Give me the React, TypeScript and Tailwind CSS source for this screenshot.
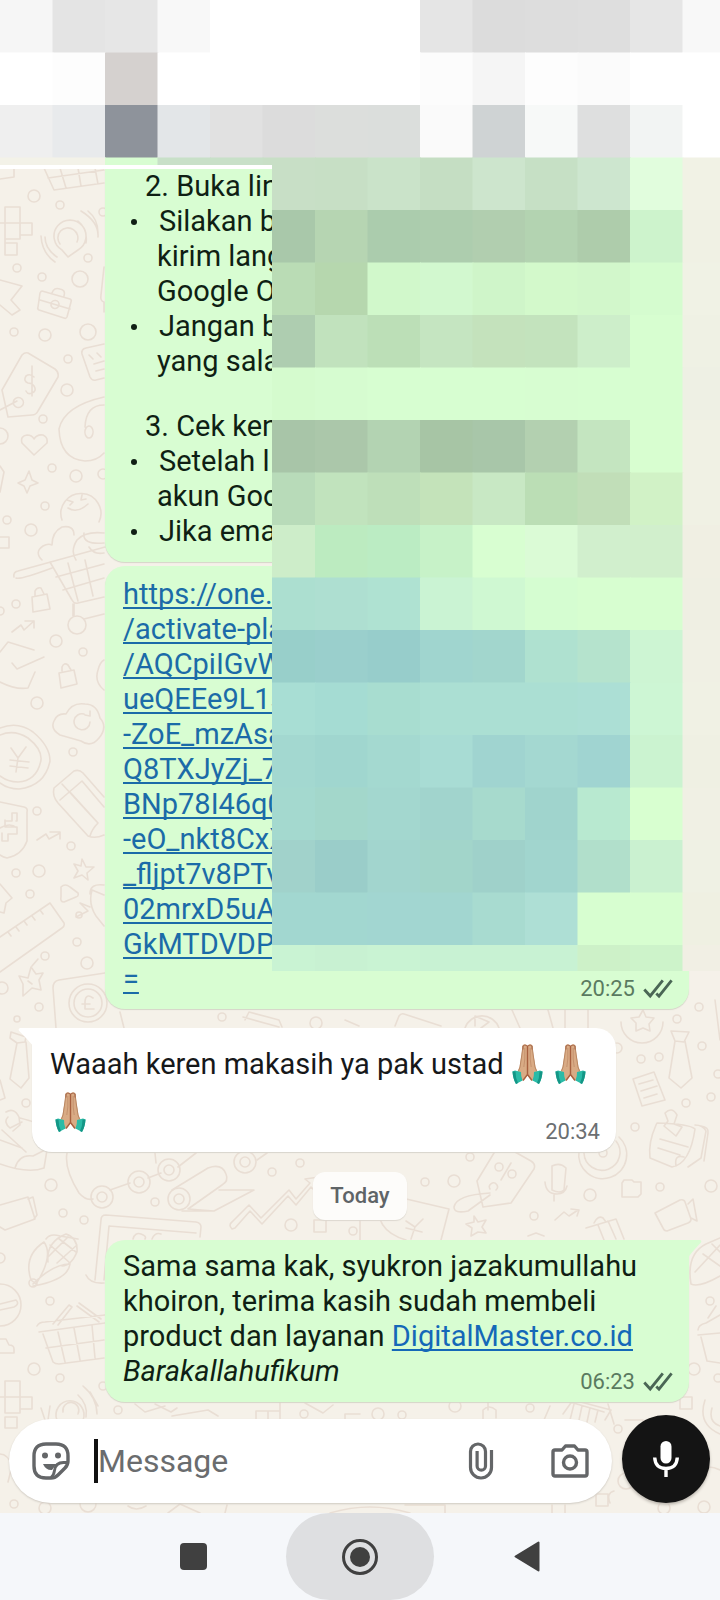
import React from 'react';

const CELL = 52.5;

// Pixelated header, one row of colours per block row
const headerRows: string[][] = [
  ['#f6f6f6', '#e4e4e4', '#e6e6e6', '#f8f8f8', '#fff', '#fff', '#fff', '#fff', '#e5e5e5', '#dcdcdc', '#dddddd', '#dedede', '#e6e6e6', '#f8f8f8'],
  ['#fff', '#fdfdfd', '#d5d1cf', '#fff', '#fff', '#fff', '#fff', '#fff', '#fcfcfc', '#f5f5f5', '#fdfdfd', '#fbfbfb', '#fff', '#fff'],
  ['#efefef', '#e8eaec', '#8e939b', '#e3e6e8', '#e1e1e1', '#dcdcdc', '#dcdedc', '#dbdedc', '#fafafa', '#cfd3d4', '#f7f9f8', '#dedfdf', '#f2f4f3', '#fff'],
  ['#f3f2e8', '#f3f2e8', '#d8fdd2', '#c8e0c8', '#c8e0c8', '#c8dfc6', '#c7dfc5', '#cae3c9', '#c5dec3', '#cde5cd', '#c6e0c5', '#cde6cf', '#e1fddd', '#f1f2e5'],
];

// Pixelated block over the sent messages
const chatRows: string[][] = [
  ['#c8dfc6', '#c7dfc5', '#cae3c9', '#c5dec3', '#cde5cd', '#c6e0c5', '#cde6cf', '#e1fddd', '#f1f2e5'],
  ['#a9c8aa', '#b6d5b2', '#abccad', '#adcdae', '#b1ceaf', '#b3d3b1', '#aeccab', '#cdf3cc', '#f0f1e4'],
  ['#badcb5', '#b6d7ae', '#d1f8cb', '#d2f8cf', '#cff5c9', '#d3f9cb', '#d2f7cb', '#d5fccf', '#f0f2e5'],
  ['#aecdb0', '#c1e2bd', '#bcdfb7', '#c5e5c1', '#c4e2bc', '#c3e3bd', '#cdeeca', '#d7fed0', '#eff1e4'],
  ['#d5fbce', '#d6fcd0', '#d7fed1', '#d7fed1', '#d7fed1', '#d7fdd1', '#d7fed1', '#d7fed0', '#eef0e4'],
  ['#a8c5a8', '#abc7aa', '#b3d3b2', '#a7c5a5', '#a8c6a9', '#b3d0b0', '#c4e5c0', '#d8fed0', '#f0f1e4'],
  ['#b8dbb9', '#c1e3bd', '#bedfb9', '#c4e3ba', '#c8e8c4', '#bbdeb5', '#c1deb8', '#d1f2c6', '#f0f1e4'],
  ['#cdedc9', '#bcebc0', '#bbecc3', '#c7f2c8', '#d8fed1', '#dbfbd6', '#d1efcd', '#d1efcc', '#f0efe3'],
  ['#acdfd0', '#aedfd1', '#afe2d2', '#caf3d3', '#cff8d2', '#d5fdd1', '#d7fed0', '#d7fed0', '#efefe3'],
  ['#98cfca', '#9acfcc', '#97cdcb', '#a0d5cf', '#a2d6cd', '#afe1d0', '#b5e3cd', '#cdf5d3', '#f0f0e4'],
  ['#a8ded4', '#a5dcd3', '#a8ddd0', '#abdfd3', '#abdfd3', '#abdfd3', '#acdfd5', '#cdf6d4', '#f0f1e4'],
  ['#a3d8d0', '#a0d6cf', '#a4d9d0', '#a8dcd4', '#a0d4d0', '#a4d8d1', '#a0d4d1', '#cbf3d0', '#eff0e3'],
  ['#a4d9cf', '#a3d7cb', '#a3d7cf', '#a1d4cd', '#a7dacd', '#a0d4cd', '#b8e9d0', '#d8ffd0', '#f0f0e4'],
  ['#a1d2cb', '#9acdc9', '#a2d5ce', '#a2d5ca', '#9fd1ca', '#a1d5ce', '#b1dfcb', '#caf1d0', '#eff1e4'],
  ['#a2d7d0', '#a2d7d0', '#a2d6d1', '#a2d6d0', '#a8dbd0', '#aedfd5', '#d7fed0', '#d7fed0', '#eff0e2'],
  ['#c9f3d3', '#c8f1d2', '#c9f3d3', '#c8f2d3', '#c8f2d3', '#c8f2d3', '#cdf1c8', '#cdf3ca', '#f1efe4'],
];

interface MosaicProps {
  rows: string[][];
  col?: number;
  row?: number;
  viewBox: string;
  className: string;
}

const Mosaic: React.FC<MosaicProps> = ({ rows, col = 0, row = 0, viewBox, className }) => (
  <svg className={className} viewBox={viewBox} preserveAspectRatio="none" aria-hidden="true">
    {rows.map((cells, r) =>
      cells.map((fill, c) => (
        <rect key={`${r}-${c}`} x={(c + col) * CELL} y={(r + row) * CELL} width={CELL + 1} height={CELL + 1} fill={fill} />
      ))
    )}
  </svg>
);

// x, y, radius
const dots: number[][] = [
  [34, 196, 6], [60, 205, 4], [103, 212, 4], [88, 258, 4], [42, 277, 4], [17, 268, 4], [80, 279, 8], [14, 332, 4], [45, 335, 6],
  [88, 332, 8], [68, 359, 4], [67, 390, 6], [43, 419, 4], [0, 436, 8], [52, 468, 4], [76, 476, 6], [103, 474, 5], [45, 506, 4], [31, 530, 6], [7, 520, 4],
  [16, 604, 4], [0, 611, 4], [56, 641, 6], [83, 652, 4], [37, 703, 6], [73, 752, 4], [37, 811, 4], [71, 846, 4], [16, 873, 4],
  [39, 871, 6], [30, 894, 4], [79, 915, 3], [77, 942, 4], [45, 956, 4], [87, 963, 6], [2, 988, 6], [39, 1007, 4],
  [17, 1019, 3], [26, 1103, 4], [51, 1185, 6], [63, 1213, 4], [84, 1220, 4], [155, 1202, 4], [272, 1172, 4], [300, 1163, 4],
  [291, 1225, 6], [222, 1017, 4], [316, 1023, 6], [353, 1231, 4], [454, 1181, 6], [425, 1182, 4], [590, 1195, 6], [711, 1186, 6],
  [660, 1187, 4], [534, 1216, 4], [635, 1127, 4], [641, 1059, 4], [659, 1057, 4], [686, 1103, 4], [711, 1097, 4], [702, 1046, 4],
  [677, 1019, 4], [699, 1007, 4], [617, 1048, 5], [718, 1074, 4], [470, 1157, 4], [50, 1301, 4], [34, 1369, 6], [60, 1378, 4], [103, 1386, 4],
  [118, 1410, 4], [0, 1258, 5], [694, 1369, 6], [710, 1301, 4], [718, 1378, 4], [378, 1414, 6], [402, 1415, 4], [455, 1406, 6],
  [530, 1408, 4], [618, 1429, 4], [626, 1481, 8], [14, 1504, 4], [45, 1508, 6], [88, 1504, 8], [704, 1507, 6], [664, 1508, 6], [304, 1414, 4],
];

const doodles: string[] = [
  // basket, cut by the header
  'M44 168l10 22 50-7M60 168l6 20M78 168l3 18M95 168l3 16M48 178l56-8M0 179l14-2v-10',
  // plus sign from squares
  'M5 207h15v16H5zM5 223h15v16H5zM20 223h12v12H20zM5 243h12v12H5zM0 223h5M5 239v4',
  // speaker with waves
  'M62 250a16 16 0 1 1 16 0l-10 7zM78 221q10 8 8 22M81 211q18 11 17 26M88 211q10 8 10 22M45 237q0 12 12 20M41 236q1 17 14 26M60 244a10 10 0 1 1 17-2',
  // star
  'M0 280l22 6-11 14 9 10-8 5-12-10',
  // briefcase
  'M42 291l28 8q2 1 1 3l-4 15q-1 2-3 1l-25-8q-2-1-1-3l2-14q1-2 2-2zM52 293q2-6 8-4 6 1 4 7M40 300l30 9M51 304a4 4 0 1 0 8 1 4 4 0 0 0-8-1',
  // price tag
  'M28 353l27 16q4 3 3 8l-20 34q-2 4-6 4l-24 2-6-27 20-35q3-3 6-2zM14 400a5 5 0 1 0 8-1 5 5 0 0 0-8 1zM0 410l17-9M26 391q2 4 6 2 5-2 2-7-2-3-6-3-5-2-2-7 4-3 8 1M32 366v30',
  // receipt
  'M104 344l-18 4q-5 1-4 6l8 23q2 4 6 3l8-2M89 355l4 4M97 353l4 4M94 364l10-3M96 371l8-2',
  // headset
  'M104 397q-40 9-45 32 1 30 26 32 12 0 19-8M104 405q-18 0-19 22M86 428a4 6 0 1 0 6 8 4 6 0 0 0-6-8M104 312v-10q-4-1-3-7l3-28',
  // heart, sparkle
  'M34 455l-12-12q-2-7 5-8 5 0 7 4 3-5 9-4 5 2 4 8zM29 471l3 9 6 3-8 3-3 7-3-7-6-3 7-3zM0 466l4 6-4 20',
  // laughing face and clouds
  'M62 520a20 20 0 1 1 37 2M67 500l6 2-3 3M82 495l-1 5 5-1M68 508q9 6 20-4M42 560q-8-8 1-14 5-3 9-1 0-13 10-18 12-2 12 8M76 560q-6-9 1-20 8-9 27-7M84 533q-2 12 20 10M0 537h9v11H0M89 547q5 8 15 6',
  // shopping cart
  'M14 577q-1-5 4-6l87-24M16 578q4 2 36-10M50 562l22 38q2 4 6 3l26-6M56 577l48-13M63 590l41-12M68 563l10 38M85 560l8 36M73 604v12M68 625a9 9 0 1 0 18 0 9 9 0 0 0-18 0zM84 619l20-5M74 604v12',
  // padlocks
  'M32 597l15-3 3 15-17 3zM35 596v-5q2-4 6-3l3 6M59 673l15-3 3 14-16 4zM62 671v-4q2-5 6-2l3 5',
  // trend lines
  'M12 632l9-7 3 5 10-9M25 621h9v7M37 840l9-6 3 5 11-6M50 832h10v7',
  // envelope and cloud
  'M0 652l8-10 26 8M12 663l5 6 27-12M0 682q16 8 28 6l7-16M60 735q-10-6-6-14 3-8 12-7 6-12 19-10 12 0 15 14 8 9-1 20-8 10-18 3zM90 722a8 8 0 1 1-6-8M85 715l5 1V711M104 690q-10-8-6-20 2-8 6-10',
  // yen coin
  'M0 728q18-7 33 4 17 14 17 29-5 25-31 28-11 0-19-6M0 735q14-6 28 3 14 11 13 22-4 21-23 22-10 0-18-6M11 748l7 10 8-11M18 758l-2 14M10 760l19 2M10 766l18 2',
  // pencil
  'M54 788l20-17q5-2 9 2l21 24M54 788q-2 8 4 15l30 33q7 3 16-1M60 800l22-19 22 26M70 792l28 31q-6 6-8 13M62 784l35 38',
  // shield
  'M0 802l24 5q4 1 3 5v29q-5 14-20 17-4-1-7-3M5 821h7v-8h5v8h-1M0 828q10-6 17 0M5 820v7h12v7H8v7H2v-8',
  // sparkle, play, arrow
  'M82 859l4 8 8 0-7 6 1 7-6-5-8 3 4-7-4-7 7 2zM61 887q4-4 9 0l8 6q1 3-2 4l-12 5q-4 0-3-5zM0 884l12 14-6 5-2 10-4-1',
  // ruler
  'M0 937l50-34 14 20q1 3-2 5L0 972M8 932l3 4M16 927l3 4M24 921l3 4M32 916l3 4M40 910l3 4M76 917l12-6-8-8 10 4M104 895l-12-5q-4 14 4 26l8 10M104 885q-14-2-14 9',
  // pin
  'M31 967l5 7 7-1-4 7 2 10-9-2-9 8v-12l-4-8 9 2zM32 966l6-7M28 981l4 3',
  // safe with coin
  'M56 1028l-3-40q0-7 6-8l46-7M69 1003a19 19 0 1 0 38 0 19 19 0 0 0-38 0zM74 1003a14 14 0 1 0 28 0 14 14 0 0 0-28 0M93 998q-7-5-8 3v8h9M82 1004h8M120 1012l4 16',
  // tie
  'M11 1032l15 5-1 5-8 1-7-5zM17 1043l-7 36 11 9 8-10-3-36M0 1080l5 18-5 2',
  // note pinned
  'M6 1112q8-5 13 5l1 8-7 6M8 1117q-5 5 2 11l12-6M0 1140l22 8M2 1130l24 22M0 1164q28 10 44 4l4-24M15 1168q4-14 18-12l12-6M20 1118q8 2 20 6',
  // camera
  'M0 1205l28-8 7 22-30 11-5-3M28 1199l5-2 4 18-3 4',
  // chain
  'M67 1153q-3 16 12 40 7 8 14 6M155 1153l1 10M110 1190l20-7M148 1178l13-5M178 1167l18-14M257 1160l10-7',
  // paper roll
  'M172 1190l36-22q14-5 18 6 3 7-4 11l-34 24M182 1211h32l40-21h-35M214 1211l-26-2',
  // growing chart
  'M232 1229q-4-4 0-7l17-17 12 13 28-28 7 9 14-16-5-4 14-2-4 14-4-4-15 18-8-9-26 28-12-13-15 17z',
  // laptop
  'M95 1280l6-60q0-5 5-5l90 7q5 1 5 5l-1 10M104 1280l5-54 87 7M86 1275q4 9 18 8M133 1239q2-7 8-5 6 2 4 5M152 1239q3-7 9-5M46 1239q4-6 14-3l18 3',
  // under the sent message
  'M245 1020l4-8 30 8 3 7M243 1017l36 10M345 1020l14 6M395 1026l4-10q2-3 5-2l37 12M465 1028a18 18 0 0 1 34 0M475 1026v-10l14 6-8 6M512 1010l8 18M548 1010l5 18M565 1010v18M588 1010v18',
  // star badge
  'M621 1022a21 21 0 1 0 42 0M643 1010l3 7 8 1-5 6 1 7-7-3-7 3 0-8-5-5 8-1zM715 1000l5 40',
  // tie
  'M671 1031l18 1-5 10-9-1zM675 1041l-6 37 12 10 11-10-7-37',
  // receipt
  'M633 1079l21-7 11 28-23 6zM639 1084l14-4M641 1091l16-5M644 1098l13-4',
  // pinned notes
  'M656 1125q-8 18-6 33l22 9q18-3 23-38-5-5-38-6zM665 1113q7-7 12 2l-3 9 8 3-6 9-12-10 4-5zM695 1125q8 0 11 6l-5 27-13 9M701 1126q8 1 7 7l-4 28M660 1139l28 8M658 1148l22 7M676 1166q-2-12 8-9',
  // target
  'M579 1151a24 24 0 1 0 40-14M584 1153a18 18 0 1 0 32-12M599 1153a4 4 0 1 0 8 0 4 4 0 0 0-8 0',
  // discount tag
  'M494 1153l-17 28 6 26 28-4 23-34q2-5-3-8l-16-9M496 1190a4 4 0 1 0-6-1M490 1193q-34 2-36 14 0 7 14 4l22-16M495 1167a4 4 0 1 0 8 0 4 4 0 0 0-8 0M508 1174a4 4 0 1 0 8 0 4 4 0 0 0-8 0M511 1163l-10 17',
  // microphone
  'M552 1166q8-4 14 2l-2 22q-4 4-12 0zM545 1182q1 12 12 12 8 0 10-8M554 1195v6',
  // folder and video camera
  'M622 1183l2-3h8l2 2h7v12l-3 3h-16zM655 1213l25-13q4-1 5 2l6 17q0 3-3 4l-21 8q-3 0-4-3zM688 1204l5-5 4 22-6-3',
  // envelope with yen sign
  'M380 1198q-8 32 26 42M402 1198l47 11-8 31M406 1221l9 6 8-8M415 1227l-4 12M406 1228l16 4M360 1220v20M314 1220h12v12h-12z',
  // sparkle, arrow, gift
  'M474 1216l4 6 8-2-4 7 4 6-8-1-7 4 1-8-6-4 8-2zM555 1220l9-8 5 4 9-6M571 1209l8 1-2 6M586 1228l30-9 8 20M598 1225l6 15M608 1221l8 18M594 1223q4-8 9-5l3 4M528 1236l8-3 8 3',
  // corn cobs
  'M31 1280q-8-24 13-38 10 14-8 42zM33 1284q20-20 37-20-2 16-37 22M29 1283a4 4 0 1 0 8 0 4 4 0 0 0-8 0M48 1262q-2-20 18-28 12 4 11 18-6 14-15 14M50 1245l20 18M58 1238l18 14M48 1257l20-20M57 1263l20-18',
  'M691 1284q-5-30 15-40M691 1284q8 4 29-8M695 1272l25-27M706 1244l14-6M703 1254l17 12M712 1244l8 8',
  // basket
  'M37 1326q2-4 8-4l60-7M39 1332l66-9M43 1334l10 28q2 2 6 2l45-6M58 1332l7 30M74 1328l6 32M92 1325l3 33M46 1348l58-8M53 1324l16-19 3 2-14 18M77 1306l22 16M79 1303l22 16',
  // pot
  'M698 1330q0-5 8-7l14-8M698 1335l22-2M701 1337l6 24 13 2M708 1318l8-12',
  // face
  'M0 1284a21 21 0 0 1 0 42M0 1304l16-4q4 4-2 7l-14 3M0 1339l6 0 3 6q5 0 5 4v4H0',
  // squares
  'M5 1381h15v16H5zM5 1397h15v16H5zM20 1397h12v12H20zM5 1417h12v11H5zM0 1397h5M256 1411h12v12M256 1411v10M280 1402v20M268 1411h12M305 1403l18 10 10-8M345 1420v-6h15',
  // speaker with waves
  'M57 1420a14 14 0 1 1 26 0M63 1412a8 8 0 1 1 15 2M41 1408l4 12M50 1406l-2 14M78 1395q10 9 8 22M83 1386q14 12 14 28M90 1392l8 14',
  // tools
  'M135 1404l10 8 20-6M155 1404l16 8 6-4M172 1416l36-6 10 6M483 1420v-10q6-6 13 0v8M488 1410v-8h8M544 1420l6-14',
  // bank
  'M563 1414l10-14 38 10-6 10M570 1402l34 10M574 1404l-4 16M582 1406l-3 14M590 1408l-3 14M598 1410l-3 12M608 1404l6 20',
  // right edge
  'M680 1397h12v12h-12zM625 1420h18v30M705 1400q-8 24 15 34M712 1408q-4 14 8 18M610 1503q-4-10 4-12M700 1470q8-6 20 0M596 1494h12v12h-12z',
  // below the composer
  'M128 1506q8 6 18 0M168 1513l12-9 20 9M225 1513l2-8M330 1513q40-12 80 0M405 1505h40v8M552 1505v8M565 1505v8M0 1454q8 0 12 12l-4 16',
];

const Wallpaper: React.FC = () => (
  <svg
    className="absolute inset-0 h-full w-full"
    viewBox="0 165 720 1348"
    preserveAspectRatio="xMidYMin slice"
    fill="none"
    stroke="#e9ded4"
    strokeWidth="1.6"
    strokeLinecap="round"
    strokeLinejoin="round"
    aria-hidden="true"
  >
    {dots.map(([cx, cy, r], i) => (
      <circle key={i} cx={cx} cy={cy} r={r} />
    ))}
    {[[102, 1197], [139, 1182], [169, 1170], [245, 1162], [179, 1199]].map(([cx, cy]) => (
      <g key={cx}>
        <circle cx={cx} cy={cy} r="11" />
        <circle cx={cx} cy={cy} r="5" />
      </g>
    ))}
    {doodles.map((d, i) => (
      <path key={i} d={d} />
    ))}
  </svg>
);

const PrayingHands: React.FC = () => (
  <svg className="inline-block h-[42px] w-[31px]" viewBox="0 0 31 42" role="img" aria-label="Praying hands">
    <path d="M15.500 2.500Q13 .5 10.800 2L9.500 12 7.500 24 5.500 28.500 9 38q3-.5 4.500-3l2-3 2 3q1.500 2.500 4.500 3l3.500-9.500-2-4.500-2-12L20.200 2Q18 .5 15.500 2.500z" fill="#d9ab85" />
    <path d="M11 2.500L9.800 12 8 24l-1.500 4M20 2.500L21.200 12 23 24l1.500 4" fill="none" stroke="#b98763" strokeWidth="1" />
    <path d="M11 6.500V3q1.500-2 4.500 0 3-2 4.500 0v3.500" fill="none" stroke="#a8694a" strokeWidth="1" />
    <path d="M15.500 3v28.500l-4.500 6M15.500 31.500l4.500 6" fill="none" stroke="#a8603f" strokeWidth="1.400" />
    <path d="M12.800 5v11l-1 8M18.200 5v11l1 8" fill="none" stroke="#c08c68" strokeWidth=".8" />
    <path d="M.5 28.500l2.500-1 6 1.500q-.2 4.500 1.500 8.500L4 41q-3-5-3.500-12.500z" fill="#2bbba7" />
    <path d="M30.500 28.500l-2.500-1-6 1.500q.2 4.500-1.500 8.500L27 41q3-5 3.500-12.500z" fill="#2bbba7" />
    <path d="M.5 28.500l3 0q0 6.500 2.500 11.500l-2 1q-3-5-3.500-12.500zM30.500 28.500l-3 0q0 6.500-2.500 11.500l2 1q3-5 3.500-12.500z" fill="#149686" />
  </svg>
);

const Ticks: React.FC = () => (
  <svg className="h-5 w-[30px]" viewBox="0 0 30 20" fill="none" stroke="#4a6655" strokeWidth="2.800" role="img" aria-label="Delivered">
    <path d="M1.300 10.500l5.900 6.500L19.800 1.300" />
    <path d="M13.300 14.500l2.700 2.700L28.600 1.300" />
  </svg>
);

interface StampProps {
  time: string;
  sent?: boolean;
}

const Stamp: React.FC<StampProps> = ({ time, sent }) => (
  <div className="absolute right-4 bottom-2 flex items-center gap-2 text-[22px] leading-6">
    <time className={sent ? 'text-[#5a7a60]' : 'text-[#6c6f72]'}>{time}</time>
    {sent && <Ticks />}
  </div>
);

const linkLines = [
  'https://one.g',
  '/activate-plan',
  '/AQCpiIGvWs',
  'ueQEEe9L1s',
  '-ZoE_mzAsa',
  'Q8TXJyZj_7s',
  'BNp78I46q0',
  '-eO_nkt8CxX',
  '_fljpt7v8PTv',
  '02mrxD5uAs',
  'GkMTDVDPs',
  '=',
];

const Item: React.FC<{ lines: string[] }> = ({ lines }) => (
  <li className="flex">
    <span className="flex h-[35px] w-[34px] shrink-0 items-center pl-2">
      <span className="size-[6px] rounded-full bg-[#0f1f14]" />
    </span>
    <p>
      {lines.map((line) => (
        <span key={line} className="block first:pl-0.5">{line}</span>
      ))}
    </p>
  </li>
);

export default function App() {
  return (
    <div className="flex min-h-screen flex-col bg-[#f5f1e9] font-[Roboto,sans-serif] text-[29px] leading-[35px] text-[#0f1f14]">
      <header>
        <Mosaic rows={headerRows} viewBox="0 0 720 165" className="block h-[165px] w-full" />
      </header>

      <main className="relative flex grow flex-col overflow-hidden">
        <Wallpaper />
        <div className="relative h-1 bg-white" />

        <section className="relative mr-[31px] ml-[105px] flex flex-col gap-1">
          <article className="rounded-b-[20px] bg-[#d8fdd2] px-[18px] pb-[13px] whitespace-nowrap shadow-[0_1px_1px_#d5d5c8]">
            <h2 className="pl-[22px]">2. Buka lin</h2>
            <ul>
              <Item lines={['Silakan b', 'kirim lang', 'Google O']} />
              <Item lines={['Jangan b', 'yang sala']} />
            </ul>
            <h2 className="pt-[30px] pl-[22px]">3. Cek ken</h2>
            <ul>
              <Item lines={['Setelah l', 'akun Goo']} />
              <Item lines={['Jika emai']} />
            </ul>
          </article>

          <article className="relative rounded-[20px] bg-[#d8fdd2] px-[18px] pt-[11px] pb-3 shadow-[0_1px_1px_#d5d5c8]">
            <a href="#activate" className="text-[#1b6ba8] underline decoration-2 underline-offset-3 [text-decoration-skip-ink:none]">
              {linkLines.map((line) => (
                <React.Fragment key={line}>
                  {line}
                  <br />
                </React.Fragment>
              ))}
            </a>
            <Stamp time="20:25" sent />
          </article>
        </section>

        <Mosaic
          rows={chatRows}
          col={5}
          row={3}
          viewBox="272 165 448 806"
          className="absolute top-0 right-0 left-[272px] h-[806px] w-[calc(100%-272px)]"
        />

        <article className="relative mt-[19px] mr-[104px] ml-8 rounded-[20px] rounded-tl-none bg-white px-[18px] pt-3 pb-4 text-[#16181a] shadow-[0_1px_1px_#d8d4cc]">
          <svg className="absolute top-0 -left-[14px] h-[18px] w-[15px]" viewBox="0 0 15 18" fill="#fff" aria-hidden="true">
            <path d="M2 0h13v18Q12 14 .8 2.500Q0 .5 2 0z" />
          </svg>
          <p className="flex flex-wrap items-center gap-x-3 leading-[48px]">
            <span className="flex items-center gap-2">
              Waaah keren makasih ya pak ustad <PrayingHands />
            </span>
            <PrayingHands />
            <span className="flex h-12 basis-full items-center pl-[5px]">
              <PrayingHands />
            </span>
          </p>
          <Stamp time="20:34" />
        </article>

        <div className="relative mt-5 self-center rounded-xl bg-[#fdfcfa] px-[17px] py-[9px] text-[22px] leading-[30px] font-medium text-[#5f6467] shadow-[0_1px_1px_#ddd8d0]">
          Today
        </div>

        <article className="relative mt-5 mr-[31px] ml-[105px] rounded-[20px] rounded-tr-none bg-[#d8fdd2] px-[18px] pt-[9px] pb-[13px] shadow-[0_1px_1px_#d5d5c8]">
          <svg className="absolute top-0 -right-[13px] h-[18px] w-[14px]" viewBox="0 0 14 18" fill="#d8fdd2" aria-hidden="true">
            <path d="M12 0H0v18Q2 14 13 2.500Q14 .5 12 0z" />
          </svg>
          <p>
            Sama sama kak, syukron jazakumullahu khoiron, terima kasih sudah membeli
          </p>
          <p>
            product dan layanan{' '}
            <a href="https://digitalmaster.co.id" className="text-[#1468b8] underline decoration-2 underline-offset-3 [text-decoration-skip-ink:none]">
              DigitalMaster.co.id
            </a>
          </p>
          <p>
            <em>Barakallahufikum</em>
          </p>
          <Stamp time="06:23" sent />
        </article>

        <form className="relative mt-auto flex items-end gap-[10px] pt-3 pr-[10px] pb-[10px] pl-[9px]">
          <div className="flex h-[84px] min-w-0 grow items-center rounded-full bg-white pr-[23px] pl-[23px] text-[#646668] shadow-[0_1px_2px_#cfcac2]">
            <button type="button" aria-label="Stickers" className="shrink-0">
              <svg className="size-[38px]" viewBox="0 0 38 38" fill="none" stroke="currentColor" strokeWidth="3.400" strokeLinejoin="round">
                <path d="M36 19V14Q36 2 24 2H14Q2 2 2 14v10q0 12 12 12h5q4 0 7-3l7-7q3-3 3-7z" />
                <path d="M35.500 20.500h-4q-8 0-9 8-.5 4.500-3.500 7" strokeWidth="2.800" />
                <circle cx="13" cy="13.500" r="3" fill="currentColor" stroke="none" />
                <circle cx="26" cy="13.500" r="3" fill="currentColor" stroke="none" />
                <path d="M11 22h13.500l-4.500 6q-6 .5-9-6z" fill="currentColor" stroke="none" />
              </svg>
            </button>
            <span className="ml-6 h-11 w-[4px] shrink-0 bg-[#111]" />
            <input
              aria-label="Message"
              placeholder="Message"
              className="min-w-0 grow bg-transparent text-[32px] leading-10 text-[#111] outline-none placeholder:text-[#6a6c6e]"
            />
            <button type="button" aria-label="Attach" className="mr-[57px] shrink-0">
              <svg className="h-[38px] w-[26px]" viewBox="0 0 26 38" fill="none" stroke="currentColor" strokeWidth="3.200">
                <path d="M23.500 8v17.500a10.500 10.500 0 0 1-21 0V9.500a7.500 7.500 0 0 1 15 0V24a4.200 4.200 0 0 1-8.400 0V9" />
              </svg>
            </button>
            <button type="button" aria-label="Camera" className="shrink-0">
              <svg className="h-[34px] w-[38px]" viewBox="0 0 38 34" fill="none" stroke="currentColor" strokeWidth="3.400" strokeLinejoin="round">
                <path d="M4 6h7l3.500-4h9L27 6h7q2 0 2 2v22q0 2-2 2H4q-2 0-2-2V8q0-2 2-2z" />
                <circle cx="19" cy="18.500" r="6.500" />
              </svg>
            </button>
          </div>
          <button type="button" aria-label="Record voice message" className="flex size-[88px] shrink-0 items-center justify-center rounded-full bg-[#141414] shadow-[0_2px_3px_#bdb8b0]">
            <svg className="h-9 w-[26px]" viewBox="0 0 26 36" fill="none" stroke="#fff" strokeWidth="3.400">
              <rect x="7.500" y="0" width="11" height="22.500" rx="5.500" fill="#fff" stroke="none" />
              <path d="M1.700 16.500q.6 11 11.300 11t11.300-11M13 27v9" />
            </svg>
          </button>
        </form>
      </main>

      <nav className="flex h-[87px] items-center justify-center gap-[79px] bg-[#f5f7fa]">
        <button type="button" aria-label="Recent apps" className="flex size-[27px] items-center justify-center">
          <span className="size-[27px] rounded-[4px] bg-[#404040]" />
        </button>
        <button type="button" aria-label="Home" className="flex h-full w-[148px] items-center justify-center rounded-full bg-[#dedfe1]">
          <svg className="size-9" viewBox="0 0 36 36" aria-hidden="true">
            <circle cx="18" cy="18" r="16.500" fill="none" stroke="#404040" strokeWidth="3" />
            <circle cx="18" cy="18" r="10" fill="#404040" />
          </svg>
        </button>
        <button type="button" aria-label="Back" className="flex size-[27px] items-center justify-center">
          <svg className="h-[31px] w-[26px]" viewBox="0 0 26 31" fill="#404040" stroke="#404040" strokeWidth="2" strokeLinejoin="round" aria-hidden="true">
            <path d="M24.500 1.500v28L1.500 15.500z" />
          </svg>
        </button>
      </nav>
    </div>
  );
}
